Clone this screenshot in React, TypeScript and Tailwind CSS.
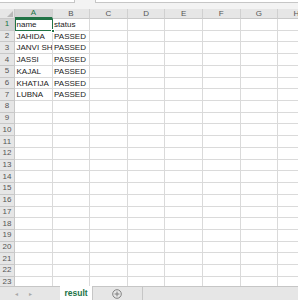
import React from "react";

const cols = ["A", "B", "C", "D", "E", "F", "G", "H"];
const data: [string, string][] = [
  ["name", "status"],
  ["JAHIDA", "PASSED"],
  ["JANVI SHARMA", "PASSED"],
  ["JASSI", "PASSED"],
  ["KAJAL", "PASSED"],
  ["KHATIJA", "PASSED"],
  ["LUBNA", "PASSED"],
];
const rows = Array.from({ length: 24 }, (_, i) => i + 1);

function App() {
  return (
    <div
      className="w-[298px] h-[300px] overflow-hidden bg-white flex flex-col text-[8px] text-[#222]"
      style={{ fontFamily: '"Liberation Sans", Arial, sans-serif' }}
    >
      {/* formula bar remnant */}
      <div className="h-[9px] shrink-0 bg-[#f3f3f3] flex items-start">
        <div className="w-[75px] h-[3px] bg-white border-b border-r border-[#c6c6c6]" />
        <div className="w-[20px]" />
        <div className="flex-1 h-[3px] bg-white border-b border-l border-[#c6c6c6]" />
      </div>

      {/* grid */}
      <div className="flex-1 min-h-0 overflow-hidden relative">
        {/* column header */}
        <div className="flex h-[10px]">
          <div className="w-[15px] shrink-0 bg-[#e6e6e6] border-r border-b border-[#c8c8c8] relative overflow-hidden">
            <div className="absolute right-[1px] bottom-[1px] w-0 h-0 border-l-[6px] border-l-transparent border-b-[6px] border-b-[#b8b8b8]" />
          </div>
          {cols.map((c) => (
            <div
              key={c}
              className={`w-[37.6px] shrink-0 flex items-center justify-center text-[8px] border-r border-[#d0d0d0] ${
                c === "A"
                  ? "bg-[#d3d3d3] text-[#217346] border-b-2 border-b-[#217346]"
                  : "bg-[#e6e6e6] text-[#555] border-b border-b-[#c8c8c8]"
              }`}
            >
              {c}
            </div>
          ))}
        </div>

        {rows.map((r) => {
          const row = data[r - 1];
          return (
            <div key={r} className="flex h-[11.73px]">
              <div
                className={`w-[15px] shrink-0 flex items-center justify-center text-[8px] border-r border-b border-[#c8c8c8] ${
                  r === 1 ? "bg-[#d3d3d3] text-[#217346]" : "bg-[#e6e6e6] text-[#555]"
                }`}
              >
                {r}
              </div>
              {cols.map((c, ci) => (
                <div
                  key={c}
                  className="w-[37.6px] shrink-0 border-r border-b border-[#dadada] overflow-hidden whitespace-nowrap pl-[1.5px] pt-[1px] leading-[10px]"
                >
                  {row && ci < 2 ? row[ci] : ""}
                </div>
              ))}
            </div>
          );
        })}

        {/* selection A1 */}
        <div className="absolute left-[15px] top-[9.5px] w-[37.6px] h-[12.3px] border-[1.5px] border-[#217346] pointer-events-none">
          <div className="absolute right-[-3px] bottom-[-3px] w-[4px] h-[4px] bg-[#217346] border border-white" />
        </div>
      </div>

      {/* sheet tabs */}
      <div className="h-[14px] shrink-0 bg-[#e6e6e6] border-t border-[#c6c6c6] flex items-stretch">
        <div className="w-[60px] flex items-center gap-[11px] pl-[15px] text-[#a8a8a8] text-[6px] leading-none">
          <span>◂</span>
          <span>▸</span>
        </div>
        <div className="w-[32px] bg-white flex items-center justify-center font-bold text-[#217346] text-[8.5px] -mt-[1px] shadow-[1px_0_0_#c6c6c6]">
          result
        </div>
        <div className="w-[50px] flex items-center justify-center">
          <svg width="10" height="10" viewBox="0 0 10 10">
            <circle cx="5" cy="5" r="4.3" fill="none" stroke="#777" strokeWidth="0.9" />
            <path d="M5 2.6v4.8M2.6 5h4.8" stroke="#777" strokeWidth="0.9" />
          </svg>
        </div>
        <div className="w-px bg-[#c6c6c6]" />
      </div>
    </div>
  );
}

export default App;
